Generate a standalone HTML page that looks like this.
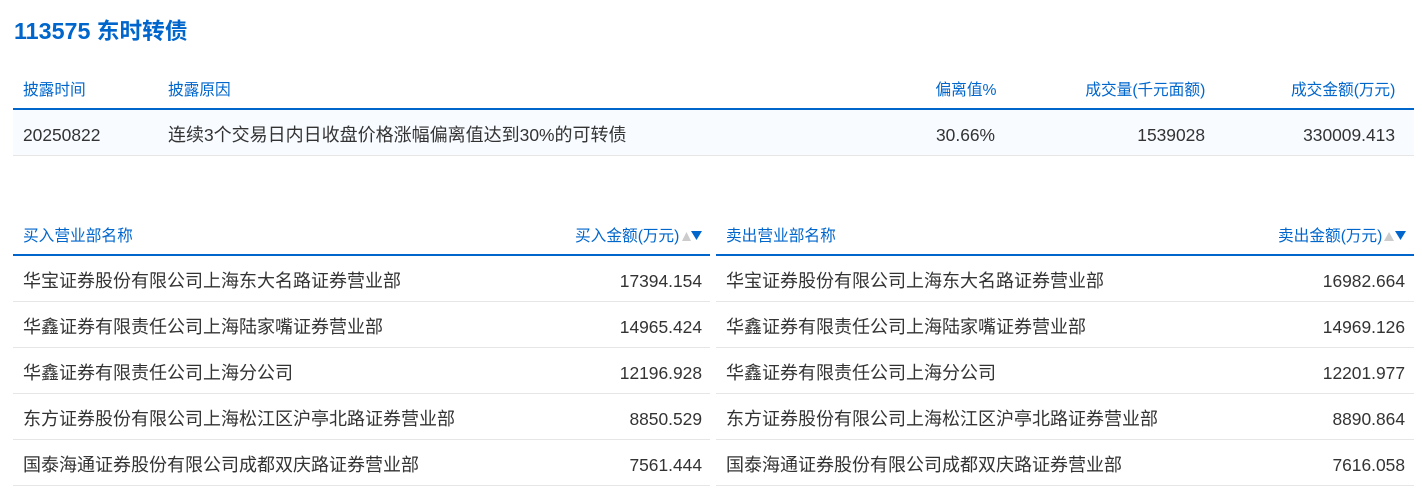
<!DOCTYPE html>
<html lang="zh">
<head>
<meta charset="utf-8">
<style>
html,body{margin:0;padding:0;background:#fff}
body{position:relative;width:1422px;height:489px;overflow:hidden;font-family:"Liberation Sans","Noto Sans CJK SC",sans-serif;font-size:18px;color:#333}
.t{position:absolute;white-space:nowrap;line-height:20px}
.h{font-size:15.7px;color:#0066cc}
.r{text-align:right}
.n{font-size:17.4px}
.p{letter-spacing:-0.3px}
.l{position:absolute;height:1px;background:#e6e6e6}
.b{position:absolute;height:2px;background:#0066cc}
.tri{position:absolute}
</style>
</head>
<body>
<div class="t" style="left:14px;top:19px;line-height:24px;font-size:22.7px;font-weight:bold;color:#0066cc"><span style="font-size:23.300px">113575</span> 东时转债</div>

<div class="t h" style="left:23px;top:81px">披露时间</div>
<div class="t h" style="left:168px;top:81px">披露原因</div>
<div class="t h r" style="right:427px;top:81px">偏离值<span style="letter-spacing:-1.500px">%</span></div>
<div class="t h r" style="right:217px;top:81px">成交量<span class="p">(</span>千元面额<span class="p">)</span></div>
<div class="t h r" style="right:27px;top:81px">成交金额<span class="p">(</span>万元<span class="p">)</span></div>
<div class="b" style="left:13px;top:108px;width:1401px"></div>
<div style="position:absolute;left:13px;top:110px;width:1401px;height:45px;background:#f8fbff"></div>
<div class="l" style="left:13px;top:155px;width:1401px"></div>
<div class="t n" style="left:23px;top:125px">20250822</div>
<div class="t" style="left:168px;top:125px">连续<span class="n">3</span>个交易日内日收盘价格涨幅偏离值达到<span class="n">30%</span>的可转债</div>
<div class="t r n" style="right:427px;top:125px">30.66%</div>
<div class="t r n" style="right:217px;top:125px">1539028</div>
<div class="t r n" style="right:27px;top:125px">330009.413</div>

<div class="t h" style="left:23px;top:227px">买入营业部名称</div>
<div class="t h r" style="right:743px;top:227px">买入金额<span class="p">(</span>万元<span class="p">)</span></div>
<svg class="tri" style="left:680px;top:230px" width="24" height="12"><path d="M2 11L6.500 2L11 11Z" fill="#cccccc"/><path d="M11 1H22L16.500 10Z" fill="#0066cc"/></svg>
<div class="b" style="left:13px;top:254px;width:697px"></div>

<div class="t h" style="left:726px;top:227px">卖出营业部名称</div>
<div class="t h r" style="right:40px;top:227px">卖出金额<span class="p">(</span>万元<span class="p">)</span></div>
<svg class="tri" style="left:1383px;top:230px" width="24" height="12"><path d="M1 11L6 2L11 11Z" fill="#cccccc"/><path d="M12 1H23L17.500 10Z" fill="#0066cc"/></svg>
<div class="b" style="left:716px;top:254px;width:698px"></div>

<div class="t" style="left:23px;top:271px">华宝证券股份有限公司上海东大名路证券营业部</div>
<div class="t r n" style="right:720px;top:271px">17394.154</div>
<div class="t" style="left:726px;top:271px">华宝证券股份有限公司上海东大名路证券营业部</div>
<div class="t r n" style="right:17px;top:271px">16982.664</div>
<div class="l" style="left:13px;top:301px;width:697px"></div>
<div class="l" style="left:716px;top:301px;width:698px"></div>

<div class="t" style="left:23px;top:317px">华鑫证券有限责任公司上海陆家嘴证券营业部</div>
<div class="t r n" style="right:720px;top:317px">14965.424</div>
<div class="t" style="left:726px;top:317px">华鑫证券有限责任公司上海陆家嘴证券营业部</div>
<div class="t r n" style="right:17px;top:317px">14969.126</div>
<div class="l" style="left:13px;top:347px;width:697px"></div>
<div class="l" style="left:716px;top:347px;width:698px"></div>

<div class="t" style="left:23px;top:363px">华鑫证券有限责任公司上海分公司</div>
<div class="t r n" style="right:720px;top:363px">12196.928</div>
<div class="t" style="left:726px;top:363px">华鑫证券有限责任公司上海分公司</div>
<div class="t r n" style="right:17px;top:363px">12201.977</div>
<div class="l" style="left:13px;top:393px;width:697px"></div>
<div class="l" style="left:716px;top:393px;width:698px"></div>

<div class="t" style="left:23px;top:409px">东方证券股份有限公司上海松江区沪亭北路证券营业部</div>
<div class="t r n" style="right:720px;top:409px">8850.529</div>
<div class="t" style="left:726px;top:409px">东方证券股份有限公司上海松江区沪亭北路证券营业部</div>
<div class="t r n" style="right:17px;top:409px">8890.864</div>
<div class="l" style="left:13px;top:439px;width:697px"></div>
<div class="l" style="left:716px;top:439px;width:698px"></div>

<div class="t" style="left:23px;top:455px">国泰海通证券股份有限公司成都双庆路证券营业部</div>
<div class="t r n" style="right:720px;top:455px">7561.444</div>
<div class="t" style="left:726px;top:455px">国泰海通证券股份有限公司成都双庆路证券营业部</div>
<div class="t r n" style="right:17px;top:455px">7616.058</div>
<div class="l" style="left:13px;top:485px;width:697px"></div>
<div class="l" style="left:716px;top:485px;width:698px"></div>
</body>
</html>
